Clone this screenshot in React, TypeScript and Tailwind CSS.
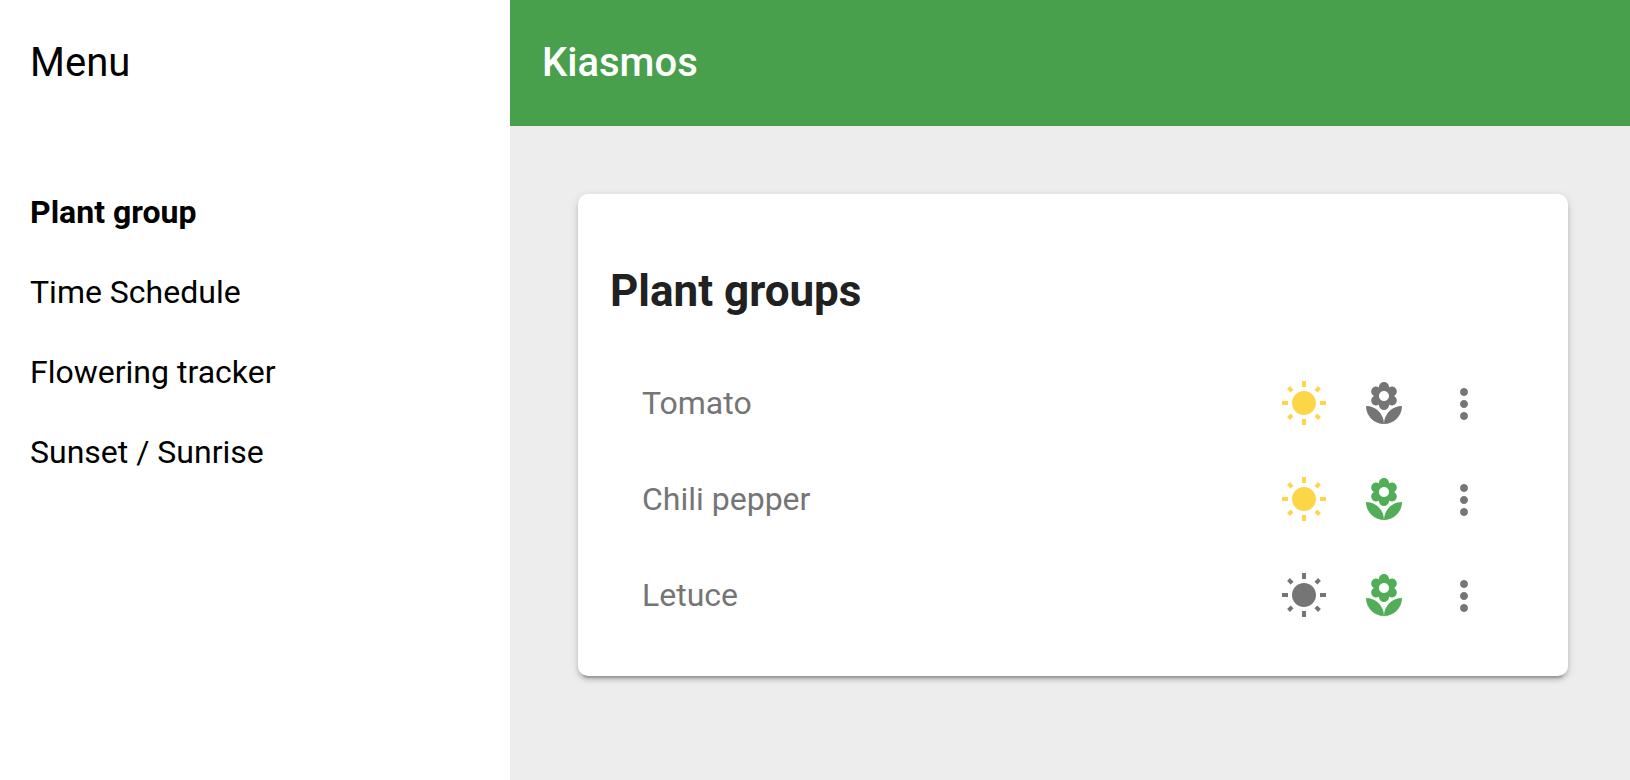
type IconProps = { className: string };

function SunIcon({ className }: IconProps) {
  return (
    <svg viewBox="0 0 24 24" fill="currentColor" aria-hidden="true" className={`size-12 ${className}`}>
      <path d="M6.76 4.84l-1.8-1.79-1.41 1.41 1.79 1.79 1.42-1.41zM4 10.5H1v2h3v-2zm9-9.95h-2V3.5h2V.55zm7.45 3.91l-1.41-1.41-1.79 1.79 1.41 1.41 1.79-1.79zm-3.21 13.7l1.79 1.8 1.41-1.41-1.8-1.79-1.4 1.4zM20 10.5v2h3v-2h-3zm-8-5c-3.31 0-6 2.69-6 6s2.69 6 6 6 6-2.69 6-6-2.69-6-6-6zm-1 16.95h2V19.5h-2v2.95zm-7.45-3.91l1.41 1.41 1.79-1.8-1.41-1.41-1.79 1.8z" />
    </svg>
  );
}

function FlowerIcon({ className }: IconProps) {
  return (
    <svg viewBox="0 0 24 24" fill="currentColor" aria-hidden="true" className={`size-12 ${className}`}>
      <path d="M12 22c4.97 0 9-4.03 9-9-4.97 0-9 4.03-9 9zM5.6 10.25c0 1.38 1.12 2.5 2.5 2.5.53 0 1.01-.16 1.42-.44l-.02.19c0 1.38 1.12 2.5 2.5 2.5s2.5-1.12 2.5-2.5l-.02-.19c.4.28.89.44 1.42.44 1.38 0 2.5-1.12 2.5-2.5 0-1-.59-1.85-1.43-2.25.84-.4 1.43-1.25 1.43-2.25 0-1.38-1.12-2.5-2.5-2.5-.53 0-1.01.16-1.42.44l.02-.19C14.5 2.12 13.38 1 12 1S9.5 2.12 9.5 3.5l.02.19c-.4-.28-.89-.44-1.42-.44-1.38 0-2.5 1.12-2.5 2.5 0 1 .59 1.85 1.43 2.25-.84.4-1.43 1.25-1.43 2.25zM12 5.5c1.38 0 2.5 1.12 2.5 2.5s-1.12 2.5-2.5 2.5S9.5 9.38 9.5 8s1.12-2.5 2.5-2.5zM3 13c0 4.97 4.03 9 9 9 0-4.97-4.03-9-9-9z" />
    </svg>
  );
}

function MoreIcon({ className }: IconProps) {
  return (
    <svg viewBox="0 0 24 24" fill="currentColor" aria-hidden="true" className={`size-12 ${className}`}>
      <path d="M12 8c1.1 0 2-.9 2-2s-.9-2-2-2-2 .9-2 2 .9 2 2 2zm0 2c-1.1 0-2 .9-2 2s.9 2 2 2 2-.9 2-2-.9-2-2-2zm0 6c-1.1 0-2 .9-2 2s.9 2 2 2 2-.9 2-2-.9-2-2-2z" />
    </svg>
  );
}

const menuItems = [
  { label: "Plant group", href: "#plant-group", active: true },
  { label: "Time Schedule", href: "#time-schedule", active: false },
  { label: "Flowering tracker", href: "#flowering-tracker", active: false },
  { label: "Sunset / Sunrise", href: "#sunset-sunrise", active: false },
];

const plantGroups = [
  { name: "Tomato", light: true, flowering: false },
  { name: "Chili pepper", light: true, flowering: true },
  { name: "Letuce", light: false, flowering: true },
];

export default function App() {
  return (
    <div className="flex min-h-screen bg-[#ededed] font-['Roboto',sans-serif]">
      <aside className="w-[510px] shrink-0 bg-white text-black">
        <div className="flex h-[126px] items-center px-[30px] text-[40px]">Menu</div>
        <nav aria-label="Menu" className="pt-[46px]">
          <ul>
            {menuItems.map((item) => (
              <li key={item.label}>
                <a
                  href={item.href}
                  aria-current={item.active ? "page" : undefined}
                  className={`block px-[30px] text-[32px] leading-[80px] ${item.active ? "font-bold" : ""}`}
                >
                  {item.label}
                </a>
              </li>
            ))}
          </ul>
        </nav>
      </aside>

      <div className="min-w-0 flex-1">
        <header className="flex h-[126px] items-center bg-[#48a04c] px-8">
          <h1 className="text-[40px] font-medium text-white">Kiasmos</h1>
        </header>
        <main className="pt-[68px] pr-[62px] pb-[68px] pl-[68px]">
          <section className="rounded-[10px] bg-white px-8 pt-16 pb-8 shadow-[0_4px_4px_0_rgba(0,0,0,0.14),0_2px_10px_0_rgba(0,0,0,0.12),0_6px_2px_-4px_rgba(0,0,0,0.2)]">
            <h2 className="text-[44px] leading-[66px] font-bold text-[#212121]">Plant groups</h2>
            <ul className="pt-8">
              {plantGroups.map((group) => (
                <li key={group.name} className="flex h-24 items-center gap-8 pr-12 pl-8">
                  <span className="min-w-0 flex-1 pb-[3px] text-[32px] text-[#757575]">{group.name}</span>
                  <button type="button" aria-label={`Light for ${group.name}`} aria-pressed={group.light}>
                    <SunIcon className={group.light ? "text-[#fdd648]" : "text-[#757575]"} />
                  </button>
                  <button type="button" aria-label={`Flowering for ${group.name}`} aria-pressed={group.flowering}>
                    <FlowerIcon className={group.flowering ? "text-[#51ae56]" : "text-[#757575]"} />
                  </button>
                  <button type="button" aria-label={`More options for ${group.name}`}>
                    <MoreIcon className="text-[#757575]" />
                  </button>
                </li>
              ))}
            </ul>
          </section>
        </main>
      </div>
    </div>
  );
}
